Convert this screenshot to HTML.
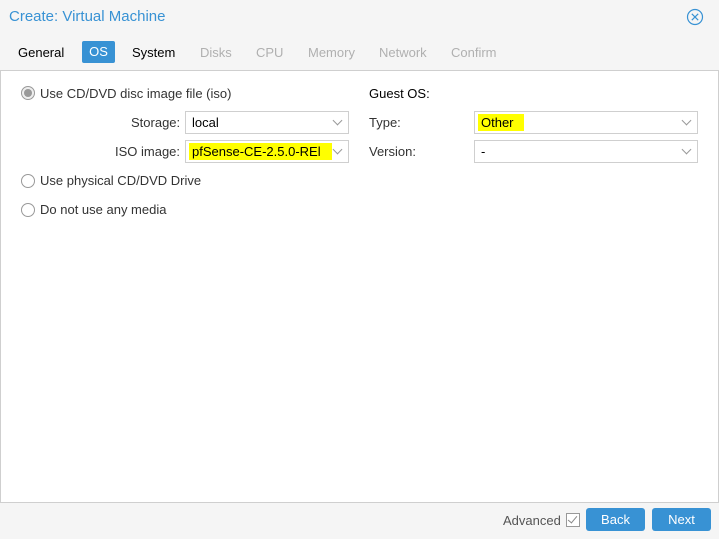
<!DOCTYPE html><html><head><style>
body{margin:0;width:719px;height:539px;background:#f5f5f5;font-family:"Liberation Sans",sans-serif;font-size:13px;color:#000;position:relative;overflow:hidden}
.a{position:absolute;white-space:nowrap}
.title{left:9px;top:8px;font-size:15px;color:#3892d4}
.tab{top:45px;font-size:13px}
.dis{color:#b0b0b0}
.panel{position:absolute;left:0;top:70px;width:717px;height:431px;background:#fff;border:1px solid #cfcfcf}
.f{position:absolute;height:21px;border:1px solid #cfcfcf;background:#fff}
.f span{position:absolute;left:3px;top:2px;padding:1px 3px;line-height:15px}
.f i{position:absolute;right:7px;top:5px;width:6px;height:6px;border-right:1px solid #999;border-bottom:1px solid #999;transform:rotate(45deg)}
.hl{background:#ffff00}
.lbl{color:#333}
.radio{position:absolute;width:12px;height:12px;border:1px solid #999;border-radius:50%;background:#fff}
.btn{position:absolute;top:508px;width:59px;height:23px;background:#3892d4;border-radius:3px;color:#fff;text-align:center;line-height:23px}
</style></head><body>
<div class="a title">Create: Virtual Machine</div>
<svg class="a" style="left:686px;top:8px" width="18" height="18" viewBox="0 0 18 18"><circle cx="9" cy="9" r="7.5" fill="none" stroke="#3892d4" stroke-width="1.2"/><path d="M5.8 5.8L12.2 12.2M12.2 5.8L5.8 12.2" stroke="#3892d4" stroke-width="1.2"/></svg>
<div class="a tab" style="left:18px">General</div>
<div class="a" style="left:82px;top:41px;width:33px;height:22px;background:#3892d4;border-radius:2px;color:#fff;text-align:center;line-height:22px">OS</div>
<div class="a tab" style="left:132px">System</div>
<div class="a tab dis" style="left:200px">Disks</div>
<div class="a tab dis" style="left:256px">CPU</div>
<div class="a tab dis" style="left:308px">Memory</div>
<div class="a tab dis" style="left:379px">Network</div>
<div class="a tab dis" style="left:451px">Confirm</div>
<div class="panel"></div>
<div class="radio" style="left:21px;top:86px;background:#eee"><div style="position:absolute;left:2px;top:2px;width:8px;height:8px;border-radius:50%;background:#999"></div></div>
<div class="a lbl" style="left:40px;top:86px">Use CD/DVD disc image file (iso)</div>
<div class="a lbl" style="left:131px;top:115px">Storage:</div>
<div class="a lbl" style="left:115px;top:144px">ISO image:</div>
<div class="f" style="left:185px;top:111px;width:162px"><span>local</span><i></i></div>
<div class="f" style="left:185px;top:140px;width:162px"><span class="hl" style="width:137px">pfSense-CE-2.5.0-REl</span><i></i></div>
<div class="radio" style="left:21px;top:174px"></div>
<div class="a lbl" style="left:40px;top:173px">Use physical CD/DVD Drive</div>
<div class="radio" style="left:21px;top:203px"></div>
<div class="a lbl" style="left:40px;top:202px">Do not use any media</div>
<div class="a" style="left:369px;top:86px">Guest OS:</div>
<div class="a lbl" style="left:369px;top:115px">Type:</div>
<div class="a lbl" style="left:369px;top:144px">Version:</div>
<div class="f" style="left:474px;top:111px;width:222px"><span class="hl" style="width:40px">Other</span><i></i></div>
<div class="f" style="left:474px;top:140px;width:222px"><span>-</span><i></i></div>
<div class="a" style="left:503px;top:513px;color:#555">Advanced</div>
<div class="a" style="left:566px;top:513px;width:12px;height:12px;border:1px solid #999;background:#fff"><div style="position:absolute;left:3px;top:0px;width:4px;height:8px;border-right:1px solid #888;border-bottom:1px solid #888;transform:rotate(40deg)"></div></div>
<div class="btn" style="left:586px">Back</div>
<div class="btn" style="left:652px">Next</div>
</body></html>
